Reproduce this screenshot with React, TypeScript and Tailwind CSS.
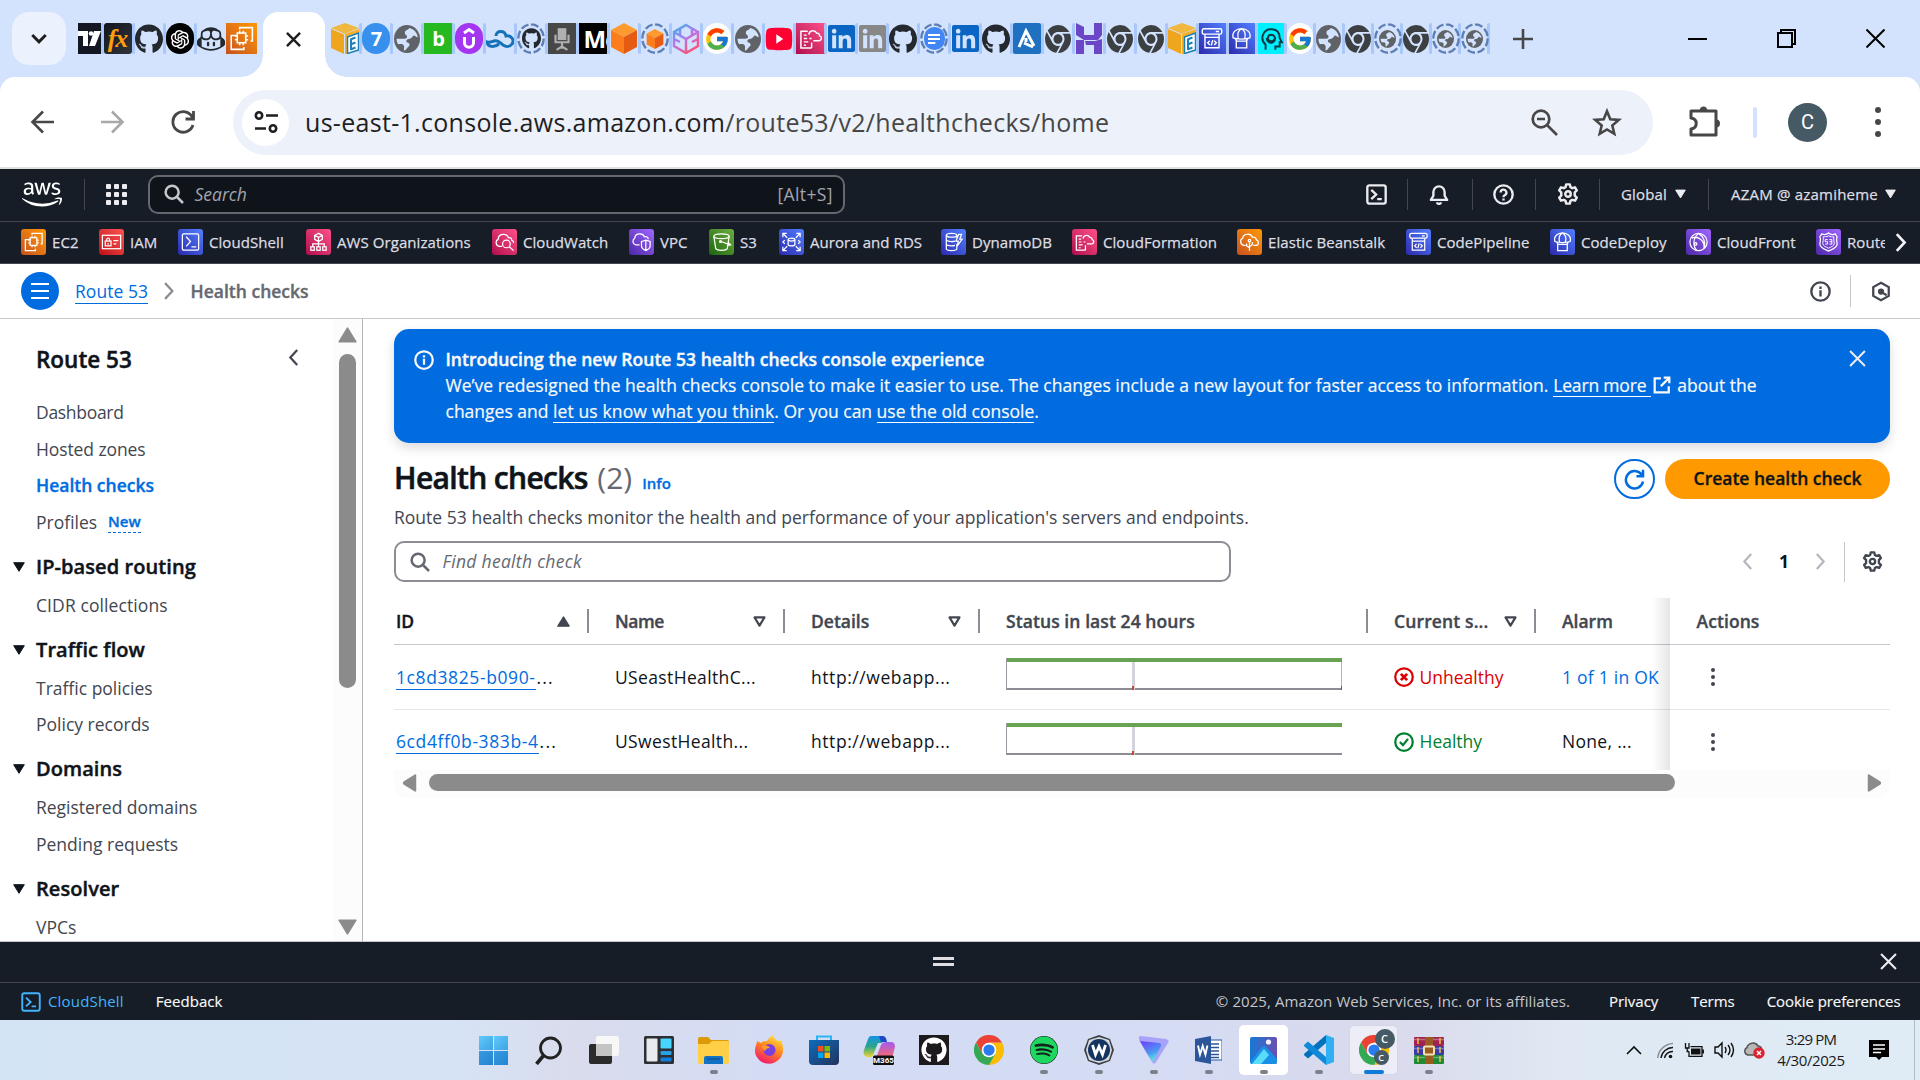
import React from 'react';
import { FaAws, FaGithub, FaYoutube, FaLinkedin, FaChrome, FaSpotify } from 'react-icons/fa6';
import { FcGoogle } from 'react-icons/fc';
import { AiOutlineOpenAI } from 'react-icons/ai';
import { SiGithubcopilot } from 'react-icons/si';

type P = { className?: string; children?: React.ReactNode };

/* ---------- small drawing helpers ---------- */

const Line = ({ className = '', children, sw = 1.5, vb = '0 0 24 24' }: P & { sw?: number; vb?: string }) => (
  <svg viewBox={vb} className={className} fill="none" stroke="currentColor" strokeWidth={sw} strokeLinecap="butt" strokeLinejoin="miter">
    {children}
  </svg>
);

const Cog = ({ className = '' }: P) => (
  <Line className={className} vb="0 0 16 16" sw={1.8}>
    <path strokeLinejoin="round" d="M6.7 1h2.6l.5 2 1.3.75 2-.6 1.3 2.25L12.9 6.8v2.4l1.5 1.4-1.3 2.25-2-.6-1.3.75-.5 2H6.7l-.5-2-1.3-.75-2 .6-1.3-2.25 1.5-1.4V6.8L1.6 5.4l1.3-2.25 2 .6L6.2 3z" />
    <circle cx="8" cy="8" r="2" />
  </Line>
);

const Search = ({ className = '' }: P) => (
  <Line className={className} vb="0 0 16 16" sw={2}>
    <circle cx="6.5" cy="6.5" r="5.2" />
    <path d="m10.2 10.2 5 5" />
  </Line>
);

const Chevron = ({ className = '', dir = 'right', sw = 2 }: P & { dir?: 'right' | 'left'; sw?: number }) => (
  <Line className={className} vb="0 0 10 16" sw={sw}>
    <path d={dir === 'right' ? 'M1.5 1 8 8l-6.5 7' : 'M8.5 1 2 8l6.5 7'} />
  </Line>
);

const Cross = ({ className = '', sw = 2 }: P & { sw?: number }) => (
  <Line className={className} vb="0 0 16 16" sw={sw}>
    <path d="m1 1 14 14M15 1 1 15" />
  </Line>
);

const Info = ({ className = '' }: P) => (
  <Line className={className} vb="0 0 16 16" sw={1.8}>
    <circle cx="8" cy="8" r="7" />
    <path d="M8 11.8V7M8 6V4.200" />
  </Line>
);

const Shell = ({ className = '', sw = 1.8 }: P & { sw?: number }) => (
  <Line className={className} vb="0 0 16 16" sw={sw}>
    <rect x="1" y="1" width="14" height="14" rx="1.6" />
    <path d="m4 4.5 3.7 3.5L4 11.5M8.5 11.5H12" />
  </Line>
);

const Caret = ({ className = '', up = false, hollow = false }: P & { up?: boolean; hollow?: boolean }) => (
  <svg viewBox="0 0 12 10" className={className} fill={hollow ? 'none' : 'currentColor'} stroke="currentColor" strokeWidth={hollow ? 2 : 1} strokeLinejoin="round">
    <path d={up ? 'M6 .7 11.3 9.3H.7z' : hollow ? 'M6 8.8 1.4 1.2h9.2z' : 'M6 9.3.7.7h10.6z'} />
  </svg>
);

/* ---------- service glyphs, 24x24 line drawings ---------- */

const glyphs: Record<string, React.ReactNode> = {
  ec2: <><rect x="8.5" y="7.5" width="7" height="8" /><path d="M10.5 5.5v2m3-2v2m-3 8v2m3-2v2M6.5 10h2m-2 3h2m7-3h2m-2 3h2M10.5 4.5v-1.5h10.5v11h-1.5M9 9.5H3.5v11.500H14v-2" /></>,
  iam: <><rect x="2.500" y="5" width="19" height="14" /><rect x="5.500" y="11" width="6" height="5" /><path d="M7 11V9.500a1.500 1.500 0 0 1 3 0V11M14 10.500h5M14 14h3M8.500 13v1.500" /></>,
  shell: <><rect x="3.500" y="3.500" width="17" height="17" rx="1.500" /><path d="m7.500 6.500 4.500 5-4.500 5M13 17h5" /></>,
  org: <><path d="M12 3l4 2.200v4L12 11.500 8 9.200v-4zM8 5.200l4 2 4-2M12 7.200v4.300M12 11.500V17M6 17v-3h12v3" /><rect x="4" y="17" width="3.600" height="3.600" /><rect x="10.200" y="17" width="3.600" height="3.600" /><rect x="16.400" y="17" width="3.600" height="3.600" /></>,
  watch: <><path d="M9.500 16.500H6.500a4 4 0 0 1-1-7.500C5.500 3 14.500 2.500 16 7.500c2-.500 3.500.500 3.500 2.500 1.500.500 2 1.500 2 3" /><circle cx="14" cy="14" r="4" /><path d="m17 17 4.500 4" /></>,
  vpc: <><path d="M10 15H6a3.800 3.800 0 0 1-1-7c0-5.500 8.500-6 10-1.500 2-.500 4 .500 4 2.500" /><path d="M12 11.500l4.500-1.500 4.500 1.500v4.500c0 2.500-2 4-4.500 5-2.500-1-4.500-2.500-4.500-5zM16.500 10v11" /></>,
  s3: <><ellipse cx="12" cy="6" rx="8" ry="2.500" /><path d="M4 6l2 13c1.500 2.300 10.500 2.300 12 0l2-13M11.500 11.500l9.500 3.500M19 12.500l2.500 2.500-3 .500" /><circle cx="11" cy="11.500" r="1" /></>,
  rds: <><path d="M3 7V3h4M3 3l4.500 4.500M21 7V3h-4m4 0-4.500 4.500M3 17v4h4m-4 0 4.500-4.500M21 17v4h-4m4 0-4.500-4.500M5 10l-2 2 2 2M19 10l2 2-2 2" /><ellipse cx="12" cy="9.500" rx="3.500" ry="1.500" /><path d="M8.500 9.500v5c0 2 7 2 7 0v-5" /></>,
  dynamo: <><ellipse cx="10" cy="5" rx="5.500" ry="2" /><path d="M4.500 5v14c0 2.500 11 2.500 11 0v-5M4.500 9.500c0 2 6 2.500 9 1.500M4.500 14c0 2 6 2.500 9 1.500M15.500 5v3M17.500 4l-3 7h2.500l-1 5 5-7h-2.500l2-5z" /></>,
  cfn: <><path d="M13 20.500H3.500v-15H9.500M13 15.500v5M6 9h2.500M6 12h3m2 0h2M6 15h4M6 18h2" /><path d="M14.500 14H20c2.500-1 2-4 0-4.500 0-2-1.500-2.500-2.500-2.200C16 4 11 4.500 10.500 8.500" /></>,
  bean: <><path d="M8 15.500H6a4 4 0 0 1-1-7.500C5 3 13.500 2.500 15 7c2-.500 4 .500 4 2.500 3 1 3 5.500 0 6h-3" /><path d="M12 21v-9M12 18l-3-2v-2.500M12 17l3-2.500V12" /><circle cx="12" cy="10.500" r="1.300" /></>,
  pipe: <><rect x="3" y="3" width="18" height="5" rx="1.500" /><path d="M5.500 8v3h13V8M5.500 11v9.500h13V11M10 14l-2 2 2 2M14 14l2 2-2 2M12.700 13.500l-1.400 5M15.500 5.500h3" /></>,
  deploy: <><path d="M4 11.500C2.500 6 7 2.500 12 2.500s9.500 3.500 8 9c-4 1.500-12 1.500-16 0zM12 2.500C7.500 5 8 9 9 12.500M12 2.500c4.500 2.500 4 6.500 3 10M6 12.500l1.500 2m10.500-2-1.500 2M7 14.500h10v6.500H7z" /></>,
  front: <><circle cx="12" cy="12" r="9" /><path d="M12 3c-6 5-6 13-2 17.500M12 3c5 3 8 9 5.500 16M5 8c6-3 13 2 13 10" /><circle cx="9" cy="14" r="1.300" /></>,
  route: <><path d="M12 2.500c2.500 2 5 2 7 1l2 3c-1.500 3 0 5 0 7.500 0 4-5 5.500-9 7.500-4-2-9-3.500-9-7.500C3 11.500 4.500 9.500 3 6.500l2-3c2 1 4.500 1 7-1z" /><path d="M12 5.500c2 1 4 1.300 5.500 1-.500 3 .500 5 .500 7 0 2.500-3 3.500-6 5-3-1.500-6-2.500-6-5 0-2 1-4 .500-7 1.500.300 3.500 0 5.500-1zM8.500 9.500h2.700M8.500 9.500v2.200h2.500v2.500H8.500M13 9.500h2.500v4.700H13m0-2.500h2.500" strokeWidth="1" /></>,
};

const Service = ({ g, bg, className }: { g: string; bg: string; className: string }) => (
  <span className={`flex shrink-0 items-center justify-center bg-gradient-to-tr ${bg} ${className}`}>
    <Line className="h-full w-full p-px text-white" sw={1.3}>{glyphs[g]}</Line>
  </span>
);

const orange = 'from-[#c8511b] to-[#ff9900]';
const red = 'from-[#bd0816] to-[#ff5252]';
const blue = 'from-[#2e27ad] to-[#527fff]';
const pink = 'from-[#b0084d] to-[#ff4f8b]';
const purple = 'from-[#4d27a8] to-[#a166ff]';
const green = 'from-[#1b660f] to-[#6cae3e]';

/* ---------- browser tab icons ---------- */

const Globe = ({ className = '' }: P) => (
  <svg viewBox="0 0 24 24" className={className} preserveAspectRatio="none">
    <circle cx="12" cy="12" r="12" fill="#5f6368" />
    <path fill="#d3e3fd" d="M14 2.500c-.5 2-4 1.500-4 4s2 1.800 2 3.500-2 1.800-4 1.800H2.300c0 2 .7 3.500 1.500 4.800 2-.6 4.200-.6 5.200.9s-.5 3.500.5 4.500c2-.5 2.500-2.500 4-3.500s1-3-1-3.500-1-3 1-3 3-1 4-2.500 2.500 1 4.500 1c-.5-4-3.500-7-8-8z" />
  </svg>
);
const Ring = ({ children }: P) => (
  <span className="relative flex h-[31px] w-[28px] items-center justify-center">
    <svg viewBox="0 0 28 31" className="absolute inset-0 h-[31px] w-[28px]" fill="none" stroke="#5d7fb5" strokeWidth="2.4"><ellipse cx="14" cy="15.500" rx="12.700" ry="14.200" pathLength="64" strokeDasharray="6 2" /></svg>
    {children}
  </span>
);
const CubeBox = () => (
  <svg viewBox="0 0 28 31" className="h-[31px] w-[28px]" preserveAspectRatio="none">
    <path d="M0 5 14 0l14 5-14 6z" fill="#f0b840" /><path d="M0 6l13 5.500V31L0 25z" fill="#f0a51e" /><path d="M14 11 28 6v5l-12 4v16h-2z" fill="#f5b027" />
    <path d="M16.500 14l11-4v17l-11 3.500z" fill="#fff" stroke="#1d80b8" strokeWidth="1.500" /><path d="M19.500 16.500l5-2M19.500 21.500l5-2M19.500 26.500l5-2M20 16v11" stroke="#1d80b8" strokeWidth="2" />
  </svg>
);
const Cube = ({ className = '' }: P) => (
  <svg viewBox="0 0 28 31" className={className}><path d="M14 0 27 7 14 14 1 7z" fill="#ff9a2e" /><path d="M1 7l13 7v17L1 24z" fill="#fb7d1c" /><path d="M27 7 14 14v17l13-7z" fill="#e55b14" /></svg>
);
const Sq = ({ className = '', children }: P) => <span className={`flex h-[31px] w-[28px] items-center justify-center overflow-hidden font-['Open_Sans'] font-bold ${className}`}>{children}</span>;
const Gh = () => <FaGithub className="h-[30px] w-[28px] text-[#24292f]" preserveAspectRatio="none" />;
const ChromeMono = () => <FaChrome className="h-[28px] w-[26px] text-[#3c4043]" preserveAspectRatio="none" />;
const In = ({ className = '' }: P) => <FaLinkedin className={`h-[31px] w-[27px] ${className}`} preserveAspectRatio="none" />;
const G = () => <span className="flex h-[31px] w-[28px] items-center justify-center rounded-full bg-white"><FcGoogle className="h-[26px] w-[26px]" /></span>;

const leftTabs = [
  <span className="flex h-[31px] w-[28px] items-center justify-center rounded-[3px] bg-gradient-to-br from-[#12151f] to-[#33353c] font-['Liberation_Serif'] text-[26px] font-bold italic leading-none tracking-[-1px] text-[#ff9d0a]">fx</span>,
  <Gh />,
  <span className="flex h-[31px] w-[28px] items-center justify-center rounded-full bg-black"><AiOutlineOpenAI className="h-[24px] w-[24px] text-white" /></span>,
  <SiGithubcopilot className="h-[28px] w-[28px] text-[#24292f]" preserveAspectRatio="none" />,
  <Service g="ec2" bg={orange} className="h-[31px] w-[31px]" />,
];

const rightTabs = [
  <CubeBox />,
  <Sq className="rounded-full bg-[#3790ee] text-[20px] text-white">7</Sq>,
  <Globe className="h-[28px] w-[26px]" />,
  <Sq className="bg-[#25b91f] text-[20px] text-white">b</Sq>,
  <Sq className="rounded-full bg-[#a435f0] text-white"><Line className="h-6 w-6" sw={3}><path d="M7 6l5-3.500L17 6M7.500 10v6c0 5.500 9 5.500 9 0v-6" /></Line></Sq>,
  <svg viewBox="0 0 28 18" className="h-[18px] w-[28px]"><path d="M10 6c0-6 9-6 10 0 5-1 9 4 6 8-2 3-6 3-9 1-3-3-6-5-9-4s-5 2-7 1c1 5 7 6 12 2" fill="none" stroke="#1672b6" strokeWidth="3" /></svg>,
  <Ring><FaGithub className="h-[21px] w-[19px] text-[#24292f]" preserveAspectRatio="none" /></Ring>,
  <Sq className="bg-[#474747] text-[#b0b0b0]"><Line className="h-[26px] w-[26px]" sw={2}><rect x="9" y="3" width="6" height="9" fill="currentColor" /><path d="M6 8v7h12V8M12 15v6M7 22l5-3 5 3" /></Line></Sq>,
  <Sq className="!justify-start bg-black pl-1 font-['Liberation_Serif'] text-[24px] tracking-[-1px] text-white">Me</Sq>,
  <Cube className="h-[31px] w-[28px]" />,
  <Ring><Cube className="h-[20px] w-[18px]" /></Ring>,
  <svg viewBox="0 0 28 31" className="h-[31px] w-[28px]" fill="none" strokeWidth="2.500"><defs><linearGradient id="cb" x1="0" y1="0" x2=".6" y2="1"><stop offset="0" stopColor="#2fb9e8" /><stop offset=".5" stopColor="#b178f0" /><stop offset="1" stopColor="#f7567c" /></linearGradient></defs><path stroke="url(#cb)" d="M14 2l12 7v14l-12 7L2 23V9zM2 9l12 7 12-7M14 16v14M8 5v7M20 5v7M2 16l6 3M26 16l-6 3" /></svg>,
  <G />,
  <Globe className="h-[28px] w-[26px]" />,
  <FaYoutube className="h-[30px] w-[29px] bg-[linear-gradient(#fff,#fff)] bg-[length:10px_12px] bg-center bg-no-repeat text-[#ff0033]" preserveAspectRatio="none" />,
  <Service g="cfn" bg={pink} className="h-[31px] w-[29px]" />,
  <In className="text-[#0a66c2]" />,
  <In className="text-[#888888]" />,
  <Gh />,
  <Ring><Sq className="!h-[23px] !w-[21px] shrink-0 rounded-full bg-[#4285f4] text-white"><Line className="h-4 w-4" sw={3}><path d="M3 6h18M3 12h18M3 18h11" /></Line></Sq></Ring>,
  <In className="text-[#0a66c2]" />,
  <Gh />,
  <Sq className="rounded-[2px] bg-[#1f70c1] text-white"><Line className="h-6 w-6" sw={3}><path d="M4 20 11 4l8 15M9 16l9 4M11 11v4" /></Line></Sq>,
  <ChromeMono />,
  <svg viewBox="0 0 28 31" className="h-[31px] w-[28px]" fill="#6b47c8"><path d="M1 0l8 4v8l10 0V0h8v12l-4 5H9L1 12zM1 31V17l8 0v14zM19 31v-9H11l-1-4h10l7-2v15z" /></svg>,
  <ChromeMono />,
  <ChromeMono />,
  <CubeBox />,
];

const tailTabs = [
  <Service g="pipe" bg={blue} className="h-[31px] w-[28px]" />,
  <Service g="deploy" bg={blue} className="h-[31px] w-[27px]" />,
  <Sq className="!w-[27px] bg-[#00f0ff] text-[#0b3a44]"><Line className="h-7 w-7" sw={1.800}><path d="M7 22v-5C1 12 5 2 13 3c6 .500 7 5 7 8l2 4h-2v4h-4v3M15 12a3 3 0 1 1-3-4c4 0 5 5 2 7-3 1.500-6-1-6-4" /></Line></Sq>,
  <G />,
  <Globe className="h-[28px] w-[25px]" />,
  <ChromeMono />,
  <Ring><Globe className="h-[18px] w-[17px]" /></Ring>,
  <ChromeMono />,
  <Ring><Globe className="h-[18px] w-[17px]" /></Ring>,
  <Ring><Globe className="h-[18px] w-[17px]" /></Ring>,
];

const Sep = () => <span className="h-[31px] w-[3px] shrink-0 rounded-full bg-[#a8c7fa]" />;

const TabStrip = () => (
  <div className="flex h-[77px] items-start bg-[#d3e3fd]">
    <button className="ml-3 mt-3 flex h-[53px] w-[54px] shrink-0 items-center justify-center rounded-[17px] bg-[#ebf1fd]">
      <Line className="h-[18px] w-[18px] text-[#1f1f1f]" vb="0 0 16 16" sw={2.6}><path d="m2 4.500 6 6 6-6" /></Line>
    </button>
    <div className="ml-[11.5px] mt-[23px] flex h-[31px] items-center">
      <Sq className="!w-[23px] bg-[#131722] text-white"><svg viewBox="0 0 23 16" className="h-4 w-[23px]" fill="#fff"><path d="M0 0h10v15H5V5H0zM16 0h7l-6 15h-6z" /><circle cx="13" cy="2.500" r="2.300" /></svg></Sq>
      {leftTabs.map((t, i) => (
        <div key={i} className="flex h-[31px] w-[31.3px] items-center">{i === 4 ? null : <Sep />}{t}</div>
      ))}
    </div>
    <div className="relative ml-[6px] mt-3 flex h-[65px] w-[62px] shrink-0 items-center justify-center rounded-t-[15px] bg-white pb-[11px]">
      <Cross className="h-[15px] w-[15px] text-[#1f1f1f]" sw={2.6} />
      <span className="absolute bottom-0 left-[-22px] h-[22px] w-[22px] bg-[radial-gradient(circle_at_0_0,#d3e3fd_21.5px,white_22px)]" />
      <span className="absolute bottom-0 right-[-22px] h-[22px] w-[22px] bg-[radial-gradient(circle_at_100%_0,#d3e3fd_21.5px,white_22px)]" />
    </div>
    <div className="ml-[6.5px] mt-[23px] flex h-[31px] items-center">
      {rightTabs.map((t, i) => (
        <div key={i} className="flex h-[31px] w-[31px] items-center justify-between"><span className="flex h-[31px] w-[28px] items-center justify-center">{t}</span><Sep /></div>
      ))}
      {tailTabs.map((t, i) => (
        <div key={i} className="flex h-[31px] w-[29.1px] items-center justify-between overflow-hidden"><span className="flex h-[31px] w-[26px] items-center justify-center">{t}</span><Sep /></div>
      ))}
    </div>
    <Line className="ml-[22.5px] mt-[29px] h-5 w-5 shrink-0 text-[#474747]" vb="0 0 20 20" sw={2.6}><path d="M10 0v20M0 10h20" /></Line>
    <div className="ml-auto mr-[35px] mt-[29px] flex h-[19px] items-center gap-[70px] text-black">
      <span className="h-[2px] w-[19px] bg-black" />
      <Line className="h-[19px] w-[19px]" vb="0 0 19 19" sw={2}><path d="M1 4h14v14H1zM4 4V1h14v14h-3" /></Line>
      <Line className="h-[19px] w-[19px]" vb="0 0 19 19" sw={2}><path d="m.5.5 18 18M18.500.500l-18 18" /></Line>
    </div>
  </div>
);

const Toolbar = () => (
  <div className="bg-[#d3e3fd]">
    <div className="flex h-[90px] items-center rounded-t-[15px] bg-white text-[#474747]">
      <Line className="ml-[30px] h-6 w-6" sw={2.6}><path d="M24 12H2.500M13 1.500 2.500 12 13 22.500" /></Line>
      <Line className="ml-[47px] h-6 w-6 text-[#a8a8a8]" sw={2.6}><path d="M0 12h21.500M11 1.500 21.500 12 11 22.500" /></Line>
      <Line className="ml-[46px] h-6 w-6" sw={2.8}><path d="M22 15a10.300 10.300 0 1 1-.5-7.500M22.500 1v8h-8" /></Line>
      <div className="ml-[38px] flex h-[65px] w-[1420px] items-center rounded-full bg-[#edf1fa]">
        <span className="ml-[9px] flex h-[47px] w-[47px] items-center justify-center rounded-full bg-white text-[#1f1f1f]">
          <Line className="h-[24px] w-[24px]" sw={2.6}><circle cx="5" cy="5.500" r="3.200" /><path d="M12 5.500h12M1 18.500h11" /><circle cx="19" cy="18.500" r="3.200" /></Line>
        </span>
        <span className="ml-[16px] mt-[2px] whitespace-nowrap text-[25px] tracking-[0.3px] text-[#474747]"><span className="text-[#1f1f1f]">us-east-1.console.aws.amazon.com</span>/route53/v2/healthchecks/home</span>
        <Line className="ml-auto h-[27px] w-[27px]" vb="0 0 27 27" sw={2.700}><circle cx="10" cy="10" r="8.300" /><path d="m16 16 10 10M6 10h8" /></Line>
        <Line className="ml-[34px] mr-[31px] h-[29px] w-[30px]" vb="0 0 30 29" sw={2.6}><path d="m15 3.200 3.300 8 8.500.700-6.500 5.600 2 8.300-7.300-4.400-7.300 4.400 2-8.300-6.500-5.600 8.500-.700z" /></Line>
      </div>
      <Line className="ml-[36px] h-[32px] w-[32px]" vb="0 0 32 32" sw={3}><path d="M2 5h25v24H2v-6c7-1 7-10 0-11z" strokeLinejoin="round" /><path d="M10.500 5a4 4.500 0 0 1 8 0zM27 13.500a4 4 0 0 1 0 8z" fill="currentColor" strokeWidth="0" /></Line>
      <span className="ml-[32px] h-[31px] w-[4px] rounded-full bg-[#d3e3fd]" />
      <span className="ml-[31px] flex h-[39px] w-[39px] items-center justify-center rounded-full bg-[#455a64] font-['Roboto'] text-[20px] text-white">C</span>
      <span className="ml-[47.5px] flex flex-col gap-[6px]">{[0, 1, 2].map((i) => <span key={i} className="h-[6px] w-[6px] rounded-full bg-[#474747]" />)}</span>
    </div>
    <div className="h-[2px] bg-[#dfe1dd]" />
  </div>
);

/* ---------- AWS header ---------- */

const Bar = ({ className = '' }: P) => <span className={`h-[31px] w-px bg-[#424650] ${className}`} />;

const AwsHeader = () => (
  <div className="flex h-[52px] items-center bg-[#161d26] pb-[2px] text-[15px] font-medium text-[#dedee3] [-webkit-text-stroke:0.25px]">
    <FaAws className="ml-[22px] h-[33px] w-[40px] text-white" />
    <Bar className="ml-[22px]" />
    <div className="ml-[21px] grid grid-cols-3 gap-[3px]">{Array.from({ length: 9 }, (_, i) => <span key={i} className="h-[5px] w-[5px] rounded-[1px] bg-[#ebebf0]" />)}</div>
    <div className="ml-[21px] flex h-[39px] w-[697px] items-center rounded-[10px] border-2 border-[#656871] bg-[#0f141a] text-[17.5px] font-normal text-[#a4a4ad] [-webkit-text-stroke:0]">
      <Search className="ml-[14px] h-[20px] w-[20px] text-[#c6c6cd]" />
      <span className="ml-[10.5px] italic">Search</span>
      <span className="ml-auto mr-[10px] tracking-[0.4px]">[Alt+S]</span>
    </div>
    <Shell className="ml-[521px] h-[21px] w-[21px] text-[#ebebf0]" />
    <Bar className="ml-[20px]" />
    <Line className="ml-[21px] h-[21px] w-[20px] text-[#ebebf0]" vb="0 0 16 16" sw={1.9}><path strokeLinejoin="round" d="M1.500 12.300h13L12.500 9V6a4.500 4.500 0 0 0-9 0v3z" /><path d="M6.300 14.300a1.800 1.800 0 0 0 3.400 0" /></Line>
    <Bar className="ml-[22.5px]" />
    <Line className="ml-[20px] h-[21px] w-[21px] text-[#ebebf0]" vb="0 0 16 16" sw={1.800}><circle cx="8" cy="8" r="7" /><path d="M5.800 6.500a2.200 2.200 0 1 1 3.300 1.900C8.300 8.800 8 9 8 10M8 11v1.600" /></Line>
    <Bar className="ml-[21px]" />
    <Cog className="ml-[21px] h-[22px] w-[22px] text-[#ebebf0]" />
    <Bar className="ml-[20.500px]" />
    <span className="ml-[21px] tracking-[0.16px]">Global</span>
    <Caret className="ml-[8px] h-[10px] w-[11px] text-[#ebebf0]" />
    <Bar className="ml-[22px]" />
    <span className="ml-[22px] whitespace-nowrap tracking-[0.21px]">AZAM @ azamiheme</span>
    <Caret className="ml-[7px] h-[10px] w-[11px] text-[#ebebf0]" />
  </div>
);

const favs: [string, string, string, string][] = [
  ['EC2', 'ec2', orange, 'w-[78px]'],
  ['IAM', 'iam', red, 'w-[79px]'],
  ['CloudShell', 'shell', blue, 'w-[128px]'],
  ['AWS Organizations', 'org', pink, 'w-[186px]'],
  ['CloudWatch', 'watch', pink, 'w-[137px]'],
  ['VPC', 'vpc', purple, 'w-[80px]'],
  ['S3', 's3', green, 'w-[70px]'],
  ['Aurora and RDS', 'rds', blue, 'w-[162px]'],
  ['DynamoDB', 'dynamo', blue, 'w-[131px]'],
  ['CloudFormation', 'cfn', pink, 'w-[165px]'],
  ['Elastic Beanstalk', 'bean', orange, 'w-[169px]'],
  ['CodePipeline', 'pipe', blue, 'w-[144px]'],
  ['CodeDeploy', 'deploy', blue, 'w-[136px]'],
  ['CloudFront', 'front', purple, 'w-[130px]'],
  ['Route 53', 'route', purple, 'w-[69px]'],
];

const Favorites = () => (
  <div className="flex h-[43px] items-center border-b border-t border-[#424650] bg-[#161d26] pb-px pl-[21px]">
    {favs.map(([name, g, bg, w]) => (
      <div key={name} className={`flex shrink-0 items-center overflow-hidden ${w}`}>
        <Service g={g} bg={bg} className="h-[26px] w-[25px] rounded-[3px]" />
        <span className="ml-[6px] whitespace-nowrap text-[15px] font-medium leading-[24px] tracking-[0.07px] text-[#dedee3] [-webkit-text-stroke:0.25px]">{name}</span>
      </div>
    ))}
    <Chevron className="ml-[10px] h-[21px] w-[12px] text-[#f3f3f7]" sw={2.2} />
  </div>
);

const Breadcrumbs = () => (
  <div className="flex h-[55px] items-center border-b border-[#c6c6cd] bg-white text-[17.5px] text-[#424650]">
    <span className="ml-[21px] flex h-[38px] w-[38px] flex-col items-center justify-center gap-[5px] rounded-full bg-[#006ce0]">
      {[0, 1, 2].map((i) => <span key={i} className="h-[2px] w-[18px] bg-white" />)}
    </span>
    <a className="ml-[16px] border-b border-[#006ce0] leading-[24px] tracking-[0.05px] text-[#006ce0]">Route 53</a>
    <Chevron className="ml-[15px] h-[18px] w-[12px] text-[#8c8c94]" sw={2} />
    <span className="ml-[15.5px] font-semibold text-[#656871] [-webkit-text-stroke:0.35px]">Health checks</span>
    <Info className="ml-auto h-[21px] w-[21px]" />
    <span className="ml-[19px] h-[32px] w-px bg-[#c6c6cd]" />
    <Line className="ml-[20px] mr-[29px] h-[21px] w-[20px]" vb="0 0 16 16" sw={1.800}><path d="M8 1 14.200 4.500v7L8 15l-6.200-3.500v-7z" /><circle cx="8" cy="8" r="1.600" fill="currentColor" /><path d="m8.500 8.500 4 2.500" /></Line>
  </div>
);

/* ---------- sidebar ---------- */

const Item = ({ className = '', children }: P) => <div className={`flex h-[36.5px] items-center pl-[36px] ${className}`}>{children}</div>;
const Group = ({ children }: P) => (
  <div className="flex h-[46.6px] items-center pt-[7px] text-[20px] font-semibold text-[#0f141a] [-webkit-text-stroke:0.45px]">
    <Caret className="ml-[13px] h-[10px] w-[12px]" /><span className="ml-[11px] tracking-[0.08px]">{children}</span>
  </div>
);

const Sidebar = () => (
  <aside className="flex w-[363px] shrink-0 overflow-hidden border-r border-[#b4b4bb] bg-white">
    <nav className="w-[333px] overflow-hidden text-[17.5px] text-[#424650]">
      <div className="flex h-[75px] items-center pl-[36px] pr-[34px] pt-[5px]">
        <h2 className="pt-px text-[22.5px] font-semibold text-[#0f141a] [-webkit-text-stroke:0.45px]">Route 53</h2>
        <Chevron dir="left" className="mb-[4px] ml-auto h-[17px] w-[11px]" sw={2.1} />
      </div>
      <Item className="tracking-[-0.3px]">Dashboard</Item>
      <Item className="tracking-[-0.1px]">Hosted zones</Item>
      <Item className="font-semibold text-[#006ce0] [-webkit-text-stroke:0.35px]">Health checks</Item>
      <Item>Profiles<span className="ml-[11px] border-b border-dashed border-[#006ce0] text-[15px] font-semibold leading-[22px] text-[#006ce0] [-webkit-text-stroke:0.3px]">New</span></Item>
      <Group>IP-based routing</Group>
      <Item className="tracking-[0.1px]">CIDR collections</Item>
      <Group>Traffic flow</Group>
      <Item>Traffic policies</Item>
      <Item>Policy records</Item>
      <Group>Domains</Group>
      <Item className="tracking-[-0.03px]">Registered domains</Item>
      <Item>Pending requests</Item>
      <Group>Resolver</Group>
      <Item>VPCs</Item>
    </nav>
    <div className="flex w-[29px] flex-col items-center bg-[#fcfcfc] pt-[8px] text-[#8b8b8b]">
      <Caret up className="h-[16px] w-[19px]" />
      <span className="mt-[11px] h-[334px] w-[17px] rounded-full bg-[#8b8b8b]" />
      <Caret className="mb-[6px] mt-auto h-[16px] w-[19px]" />
    </div>
  </aside>
);

/* ---------- main ---------- */

const U = ({ className = '', children }: P) => <a className={`border-b border-white pb-px ${className}`}>{children}</a>;

const Banner = () => (
  <section className="flex h-[114px] rounded-[15px] bg-[#006ce0] pl-[20px] pt-[18px] text-[17.5px] leading-[26px] text-[#f9f9fa] shadow-[0_5px_12px_rgba(0,7,22,0.14)]">
    <Info className="mt-[3px] h-[20px] w-[20px] shrink-0" />
    <div className="ml-[11.5px] w-[1400px] whitespace-nowrap [-webkit-text-stroke:0.2px]">
      <div className="-mt-px font-semibold tracking-[0.03px] [-webkit-text-stroke:0.4px]">Introducing the new Route 53 health checks console experience</div>
      <div className="flex">
        <span className="tracking-[0.027px]">We’ve redesigned the health checks console to make it easier to use. The changes include a new layout for faster access to information.</span>
        <U className="ml-[5px] h-[25px] w-[98px] tracking-[-0.18px]">Learn more</U>
        <Line className="ml-[2px] mt-[4px] h-[18px] w-[18px]" vb="0 0 16 16" sw={2}><path d="M7 2H1.500v12.500H14V9M9.500 1.500h5v5M14.500 1.500 7 9" /></Line>
        <span className="ml-[6px]">about the</span>
      </div>
      <div className="flex">
        <span className="mr-[4.500px]">changes and</span><U className="h-[25px] tracking-[0.13px]">let us know what you think</U><span className="mr-[4.500px]">. Or you can</span><U className="h-[25px]">use the old console</U>.
      </div>
    </div>
    <Cross className="ml-auto mr-[24px] mt-[3px] h-[17px] w-[17px] text-[#ebebf0]" sw={1.9} />
  </section>
);

const Head = ({ children, w, sort, pl = 'pl-[27px]', line = true }: P & { w: string; sort?: 'up' | 'down'; pl?: string; line?: boolean }) => (
  <div className={`flex shrink-0 items-center ${w} ${pl}`}>
    <span className="whitespace-nowrap">{children}</span>
    {sort && <Caret up={sort === 'up'} hollow={sort === 'down'} className="ml-auto mr-[17.5px] h-[11px] w-[13px]" />}
    {line && <span className={`h-[24px] w-[2px] bg-[#8c8c94] ${sort ? '' : 'ml-auto'}`} />}
  </div>
);

const Spark = ({ end }: { end: boolean }) => (
  <div className="-mt-[6px] flex h-[32px] w-[336px] flex-col border-b-2 border-l border-b-[#8c8c94] border-l-[#9a9aa2] bg-white">
    <div className="h-[4px] shrink-0 bg-[#67a353]" />
    <div className="flex flex-1">
      <div className="ml-[125px] flex h-[28px] w-[3px] flex-col justify-end bg-[#d3d3db]"><span className="h-[4px] w-[2px] bg-[#c8442f]" /></div>
      {end && <div className="ml-auto flex h-[28px] w-px flex-col justify-end bg-[#b5b5bd]"><span className="h-[4px] bg-[#d13212]" /></div>}
    </div>
  </div>
);

const Status = ({ ok }: { ok: boolean }) => (
  <span className={`flex items-center ${ok ? 'text-[#00802f]' : 'text-[#db0000]'}`}>
    <Line className="h-[20px] w-[20px]" vb="0 0 16 16" sw={1.8}><circle cx="8" cy="8" r="7" />{ok ? <path d="m4.700 8 2.500 2.500 4-5" /> : <path d="m5.500 5.500 5 5m0-5-5 5" strokeWidth="2.200" />}</Line>
    <span className="ml-[5.500px]">{ok ? 'Healthy' : 'Unhealthy'}</span>
  </span>
);

const Row = ({ id, name, ok, children, className = '', idCls }: P & { id: string; name: string; ok: boolean; idCls: string }) => (
  <div className={`flex items-center ${className}`}>
    <div className="w-[196px] shrink-0 pl-[2px]"><a className={`border-b border-[#006ce0] text-[#006ce0] ${idCls}`}>{id}</a><span className="pl-px tracking-[1.2px]">...</span></div>
    <div className="w-[195px] shrink-0 pl-[25px] tracking-[0.36px]">{name}</div>
    <div className="w-[196px] shrink-0 pl-[26px] tracking-[0.57px]">http://webapp...</div>
    <div className="w-[388px] shrink-0 pl-[25px]"><Spark end={!ok} /></div>
    <div className="w-[167px] shrink-0 pl-[25px]"><Status ok={ok} /></div>
    <div className="whitespace-nowrap pl-[26px]">{children}</div>
  </div>
);

const Dots = () => <span className="flex flex-col items-center gap-[3px]">{[0, 1, 2].map((i) => <span key={i} className="h-[4px] w-[4px] rounded-full bg-[#424650]" />)}</span>;

const Table = () => (
  <div className="mt-[16px]">
    <div className="flex text-[17.5px]">
      <div className="w-[1276px] overflow-hidden">
        <div className="flex h-[47px] items-center border-b border-[#c6c6cd] font-semibold text-[#424650] [-webkit-text-stroke:0.35px]">
          <Head w="w-[195px]" pl="pl-[2px]" sort="up"><span className="text-[#0f141a]">ID</span></Head>
          <Head w="w-[196px]" pl="pl-[26px]" sort="down"><span className="tracking-[-0.4px]">Name</span></Head>
          <Head w="w-[195px]" pl="pl-[26px]" sort="down">Details</Head>
          <Head w="w-[388px]" pl="pl-[26px]"><span className="tracking-[0.08px]">Status in last 24 hours</span></Head>
          <Head w="w-[168px]" pl="pl-[26px]" sort="down"><span className="tracking-[0.13px]">Current s...</span></Head>
          <Head w="w-[134px]" pl="pl-[26px]" line={false}>Alarm</Head>
        </div>
        <Row className="h-[65px] border-b border-[#e6e6ea] text-[#0f141a]" id="1c8d3825-b090-" idCls="tracking-[0.6px]" name="USeastHealthC..." ok={false}><span className="tracking-[0.24px] text-[#006ce0]">1 of 1 in OK</span></Row>
        <Row className="h-[60px] pt-[3px] text-[#0f141a]" id="6cd4ff0b-383b-4" idCls="tracking-[0.6px]" name="USwestHealth..." ok><span className="tracking-[0.3px]">None, ...</span></Row>
      </div>
      <div className="relative w-[220px] bg-white">
        <span className="absolute bottom-0 left-[-18px] top-0 w-[18px] bg-gradient-to-r from-transparent to-[rgba(0,7,22,0.1)]" />
        <div className="flex h-[47px] items-center border-b border-[#c6c6cd] pl-[26.5px] font-semibold tracking-[0.08px] text-[#424650] [-webkit-text-stroke:0.35px]">Actions</div>
        <div className="flex h-[65px] items-center border-b border-[#e6e6ea] pl-[41px]"><Dots /></div>
        <div className="flex h-[60px] items-center pl-[41px] pt-[3px]"><Dots /></div>
      </div>
    </div>
    <div className="flex h-[28px] items-center rounded-b-[14px] bg-[#fcfcfc] pb-[3px] text-[#8b8b8b]">
      <svg viewBox="0 0 10 12" className="ml-[8px] h-[18px] w-[15px]" fill="currentColor" preserveAspectRatio="none"><path d="M9.500 1v10q0 1-1 .700L1 7Q0 6 1 5L8.500.300q1-.300 1 .700z" /></svg>
      <span className="ml-[12px] h-[17px] w-[1246px] rounded-full bg-[#8b8b8b]" />
      <svg viewBox="0 0 10 12" className="ml-auto mr-[8px] h-[18px] w-[15px] rotate-180" fill="currentColor" preserveAspectRatio="none"><path d="M9.500 1v10q0 1-1 .700L1 7Q0 6 1 5L8.500.300q1-.300 1 .700z" /></svg>
    </div>
  </div>
);

const Main = () => (
  <main className="flex-1 bg-white pl-[31px] pr-[30px] pt-[10px]">
    <Banner />
    <div className="mt-[16px] flex h-[40px] items-center">
      <h1 className="flex items-baseline pt-[2px] leading-[38px]">
        <span className="text-[30px] font-semibold tracking-[-0.65px] text-[#0f141a] [-webkit-text-stroke:0.6px]">Health checks</span>
        <span className="ml-[9.5px] text-[30px] text-[#656871]">(2)</span>
        <span className="ml-[10px] text-[15px] font-semibold text-[#006ce0] [-webkit-text-stroke:0.3px]">Info</span>
      </h1>
      <span className="ml-auto flex h-[40px] w-[41px] items-center justify-center rounded-full border-2 border-[#006ce0] text-[#006ce0]">
        <Line className="h-[21px] w-[21px]" vb="0 0 16 16" sw={1.9}><path d="M14.500 9.500A6.600 6.600 0 1 1 13.500 4.500M14.500.500v5h-5" /></Line>
      </span>
      <button className="ml-[10px] flex h-[40px] w-[225px] items-center justify-center rounded-full bg-[#ff9900] pb-px text-[17.5px] font-semibold text-[#0f141a] [-webkit-text-stroke:0.35px]">Create health check</button>
    </div>
    <p className="mt-[6px] text-[17.5px] leading-[25px] tracking-[0.018px] text-[#424650]">Route 53 health checks monitor the health and performance of your application's servers and endpoints.</p>
    <div className="mt-[11px] flex h-[41px] items-center">
      <div className="flex h-[41px] w-[837px] items-center rounded-[10px] border-2 border-[#8c8c94] pl-[14px] text-[17.5px] italic text-[#656871]">
        <Search className="h-[20px] w-[20px] text-[#656871]" />
        <span className="ml-[12.5px] tracking-[0.3px]">Find health check</span>
      </div>
      <Chevron dir="left" className="ml-[511px] h-[17px] w-[11px] text-[#b4b4bb]" sw={2} />
      <span className="ml-[25px] w-[12px] text-center text-[17.5px] font-bold text-[#0f141a]">1</span>
      <Chevron className="ml-[25px] h-[17px] w-[11px] text-[#b4b4bb]" sw={2} />
      <span className="ml-[18px] h-[40px] w-px bg-[#c6c6cd]" />
      <Cog className="ml-[17px] h-[21px] w-[21px] text-[#424650]" />
    </div>
    <Table />
  </main>
);

const Footer = () => (
  <div className="border-t border-[#c6c6cd] bg-[#161d26]">
    <div className="flex h-[40px] items-center pb-px pl-[933px] pr-[23px]">
      <span className="flex flex-col gap-[3px]"><i className="h-[3px] w-[21px] bg-[#dedee3]" /><i className="h-[3px] w-[21px] bg-[#dedee3]" /></span>
      <Cross className="ml-auto h-[17px] w-[17px] text-[#ebebf0]" sw={2} />
    </div>
    <div className="flex h-[38px] items-center whitespace-nowrap border-t border-[#424650] text-[15px] text-[#f9f9fa]">
      <Shell className="ml-[21px] h-[20px] w-[20px] text-[#42b4ff]" sw={1.5} />
      <span className="ml-[7px] font-medium tracking-[0.17px] text-[#42b4ff]">CloudShell</span>
      <span className="ml-[32px] font-medium tracking-[0.05px] [-webkit-text-stroke:0.15px]">Feedback</span>
      <span className="ml-auto tracking-[0.08px] text-[#c6c6cd]">© 2025, Amazon Web Services, Inc. or its affiliates.</span>
      <span className="ml-[39px] [-webkit-text-stroke:0.15px]">Privacy</span>
      <span className="ml-[32.500px] [-webkit-text-stroke:0.15px]">Terms</span>
      <span className="ml-[32px] mr-[19.500px] tracking-[-0.08px] [-webkit-text-stroke:0.15px]">Cookie preferences</span>
    </div>
  </div>
);

/* ---------- taskbar ---------- */

const ChromeColor = ({ className = '' }: P) => (
  <svg viewBox="-12 -12 24 24" className={className}>
    <path d="M0-6H10.400A12 12 0 0 1 0 12L5.200 3z" fill="#fbbc04" /><path d="M-5.200 3-10.400-6A12 12 0 0 0 0 12L5.200 3z" fill="#34a853" />
    <path d="M-10.400-6-5.200 3 0-6H10.400A12 12 0 0 0-10.400-6z" fill="#ea4335" />
    <circle r="5.800" fill="#fff" /><circle r="4.500" fill="#2a7bf0" />
  </svg>
);

const apps: { icon: React.ReactNode; dot?: boolean; active?: string }[] = [
  { icon: <span className="grid grid-cols-2 gap-px">{[0, 1, 2, 3].map((i) => <span key={i} className={`h-[14px] w-[14px] bg-gradient-to-br ${i < 2 ? 'from-[#5fc9fb] to-[#3fa3e4]' : 'from-[#3a9be0] to-[#2384d2]'}`} />)}</span> },
  { icon: <Line className="h-[29px] w-[27px] text-[#222]" vb="0 0 27 29" sw={2.8}><circle cx="15.500" cy="12" r="10" /><path d="m9 19-7.500 9" strokeWidth="3.600" /></Line> },
  { icon: <svg viewBox="0 0 30 29" className="h-[29px] w-[30px]"><rect x="0" y="8" width="23" height="20" rx="2" fill="#2b2b2b" /><rect x="7" y="0" width="23" height="20" rx="2" fill="#f7f7f7" /><rect x="7" y="8" width="16" height="12" fill="#c4c4c4" /></svg> },
  { icon: <svg viewBox="0 0 30 28" className="h-[28px] w-[30px]"><rect width="30" height="28" rx="1.500" fill="#2d2f33" /><rect x="2.500" y="2.500" width="11" height="23" rx="1" fill="#e8eaed" /><rect x="16.500" y="2.500" width="11" height="10" rx="1" fill="#48d5ff" /><rect x="16.500" y="15" width="11" height="4" rx="1" fill="#27a0e4" /><rect x="16.500" y="21.500" width="11" height="4" rx="1" fill="#1180dc" /></svg> },
  { dot: true, icon: <svg viewBox="0 0 31 27" className="h-[27px] w-[31px]"><path d="M0 2q0-2 2-2h8l3 3h16q2 0 2 2v6H0z" fill="#dd9a08" /><path d="M0 7h11l3-3h15q2 0 2 2v19q0 2-2 2H2q-2 0-2-2z" fill="#ffcf48" /><path d="M6 27v-6q0-2 2-2h15q2 0 2 2v6z" fill="#1273c4" /><path d="M9 22h13" stroke="#0b4f93" strokeWidth="1.200" /></svg> },
  { icon: <svg viewBox="0 0 30 30" className="h-[30px] w-[30px]"><defs><linearGradient id="ff" x1=".8" y1="0" x2=".3" y2="1"><stop offset="0" stopColor="#ffe94a" /><stop offset=".45" stopColor="#ff8a1e" /><stop offset="1" stopColor="#f4156e" /></linearGradient></defs><path d="M1 16C1 11 3 9 3 6l4 2c2-2 4-2 6-2 2-3 4-5 6-6 0 3 3 4 5 6l3-.500c3 6 3 13-1 18-6 7-17 7-22 0-2-2-3-5-3-7.500z" fill="url(#ff)" /><circle cx="15.500" cy="15" r="6" fill="#7a3fe0" /><path d="M8 11c4-1 7 0 8 2-3 0-4 1-5 3-2-1-3-3-3-5z" fill="#ff9a2a" /></svg> },
  { icon: <svg viewBox="0 0 30 30" className="h-[30px] w-[30px]"><defs><linearGradient id="st" x1="0" y1="0" x2="1" y2="1"><stop offset="0" stopColor="#0d6cbd" /><stop offset="1" stopColor="#22325c" /></linearGradient></defs><path d="M8 6V1.500h14V6" fill="none" stroke="#2ab5f2" strokeWidth="2" /><path d="M0 5h30v21q0 4-4 4H4q-4 0-4-4z" fill="url(#st)" /><path d="M9 11h5.500v5.500H9z" fill="#f25022" /><path d="M15.500 11H21v5.500h-5.500z" fill="#7fba00" /><path d="M9 17.500h5.500V23H9z" fill="#00a4ef" /><path d="M15.500 17.500H21V23h-5.500z" fill="#ffb900" /></svg> },
  { icon: <svg viewBox="0 0 32 30" className="h-[30px] w-[32px]"><defs><linearGradient id="c1" x1="0" y1="0" x2="0" y2="1"><stop offset="0" stopColor="#1593e8" /><stop offset=".5" stopColor="#2aa58a" /><stop offset="1" stopColor="#f3d52c" /></linearGradient><linearGradient id="c2" x1="0" y1="0" x2="0" y2="1"><stop offset="0" stopColor="#a15bf0" /><stop offset="1" stopColor="#ff6a6a" /></linearGradient></defs><path d="M8 1h11q3 0 2 3l-2 4h-4L10 20q-1 3-5 2-6-1-4-7L5 4q1-3 3-3z" fill="url(#c1)" /><path d="M16 1h4q3 0 4 6h-6z" fill="#1b49c9" /><path d="M24 7h4q4 0 4 5l-3 11H13l5-13q1-3 6-3z" fill="url(#c2)" /><rect x="10" y="20.500" width="21" height="9.500" rx="1.500" fill="#111" /><text x="20.500" y="28.300" textAnchor="middle" fontSize="8" fontWeight="bold" fill="#fff" fontFamily="Roboto">M365</text></svg> },
  { icon: <span className="flex h-[30px] w-[30px] items-center justify-center bg-[#1c1a1c]"><FaGithub className="h-[26px] w-[26px] text-white" /></span> },
  { icon: <ChromeColor className="h-[30px] w-[30px]" /> },
  { dot: true, icon: <FaSpotify className="h-[28px] w-[28px] rounded-full bg-[#10241a] text-[#1ed760]" /> },
  { dot: true, icon: <svg viewBox="0 0 30 30" className="h-[30px] w-[30px]"><path d="M15 0 26 4l4 11-4 11-11 4L4 26 0 15 4 4z" fill="#3a4048" /><path d="M15 2 25 5l3 10-3 10-10 3L5 25 2 15 5 5z" fill="#d5d8dc" /><circle cx="15" cy="15" r="11" fill="#153560" /><path d="m8.500 10 3 9.500 3.500-8 3.500 8 3-9.500" fill="none" stroke="#fff" strokeWidth="2.800" /></svg> },
  { dot: true, icon: <svg viewBox="0 0 30 28" className="h-[28px] w-[30px]"><defs><linearGradient id="pv" x1=".2" y1="0" x2=".6" y2="1"><stop offset="0" stopColor="#6a45ff" /><stop offset=".6" stopColor="#4c9af0" /><stop offset="1" stopColor="#5ff0dc" /></linearGradient></defs><path d="M2 0l25 3q4 1 2 4L17 26q-2 3-4 0L0 4q-1-4 2-4z" fill="#a9a2fb" /><path d="M1 5l19 2q3 1 2 3l-8 16Q9 20 1 5z" fill="url(#pv)" /></svg> },
  { dot: true, icon: <svg viewBox="0 0 27 28" className="h-[28px] w-[27px]"><path d="M15 4h12v20H15z" fill="#fff" stroke="#2b579a" /><path d="M16 8h8M16 11.500h8M16 15h8M16 18.500h8M16 21.500h8" stroke="#2b579a" strokeWidth="1.500" /><path d="M0 3 16 0v28L0 25z" fill="#2b579a" /><path d="m3 9.500 2 9 2.700-8.500 2.700 8.500 2-9" fill="none" stroke="#fff" strokeWidth="1.900" /></svg> },
  { dot: true, active: 'bg-white', icon: <svg viewBox="0 0 27 27" className="h-[27px] w-[27px]"><defs><linearGradient id="ph" x1="0" y1="0" x2="1" y2="0"><stop offset="0" stopColor="#1679d6" /><stop offset="1" stopColor="#6a4fb0" /></linearGradient></defs><rect width="27" height="27" rx="2" fill="url(#ph)" /><path d="M0 25 12 10q2-2 4 0l11 12v3q0 2-2 2H2z" fill="#1b8fe8" /><path d="M2 27 14 12l5 6-8 9z" fill="#58dcf8" /><circle cx="18.500" cy="5" r="2.600" fill="#f2f2ff" /></svg> },
  { dot: true, icon: <svg viewBox="0 0 30 30" className="h-[30px] w-[30px]"><path d="M22 0l8 3v24l-8 3z" fill="#2fb0f4" /><path d="M22 0v8L4 23.500l-3.500-3q-1-1 0-2z" fill="#0072bd" /><path d="M22 30v-8L4 6.500l-3.500 3q-1 1 0 2z" fill="#1089d8" /></svg> },
  { active: 'bg-[#ecedf7] border border-[#d3d6e6]', icon: <span className="relative"><ChromeColor className="h-[30px] w-[30px]" /><span className="absolute right-[-6px] top-[-6px] flex h-[20px] w-[20px] items-center justify-center rounded-full bg-[#455a64] text-[11px] font-semibold text-white">C</span><span className="absolute bottom-0 right-0 flex h-[15px] w-[15px] items-center justify-center rounded-full bg-[#455a64] text-[9px] font-semibold text-white">C</span></span> },
  { dot: true, icon: <svg viewBox="0 0 30 27" className="h-[27px] w-[30px]"><rect width="30" height="9" rx="1" fill="#a32350" /><rect y="9" width="30" height="9" rx="1" fill="#3c3aa5" /><rect y="18" width="30" height="9" rx="1" fill="#1f8a35" /><path d="M0 2.500h30M0 11.500h30M0 20.500h30" stroke="#ffffff50" strokeWidth="1.500" /><path d="M4 1v25M26 1v25" stroke="#e6c14a" strokeWidth="1.500" strokeDasharray="6 3" /><rect x="11" width="8" height="27" fill="#9a5b22" /><rect x="10" y="9.500" width="10" height="8" rx="1" fill="none" stroke="#f4e3b0" strokeWidth="2" /></svg> },
];

const Taskbar = () => (
  <div className="flex h-[60px] bg-[linear-gradient(90deg,#d3e4f5_0%,#d6e3f4_24%,#d9dced_30%,#d3dcf5_42%,#d5dcf3_62%,#d9d9eb_72%,#dfe8f3_81%,#dfecf6_100%)] pl-[466px]">
    {apps.map((a, i) => (
      <div key={i} className="flex w-[55px] shrink-0 justify-center">
        <div className={`relative mt-[5px] flex h-[50px] w-[49px] items-center justify-center rounded-[5px] ${a.active ?? ''}`}>
          {a.icon}
          {a.dot && <span className="absolute bottom-[1px] h-[4px] w-[8px] rounded-full bg-[#7d808c]" />}
          {i === 16 && <span className="absolute bottom-0 h-[4px] w-[20px] rounded-full bg-[#0f7bd9]" />}
        </div>
      </div>
    ))}
    <div className="ml-auto flex h-[60px] items-center text-[#111]">
      <Line className="h-[10px] w-[16px]" vb="0 0 16 10" sw={1.6}><path d="m1 9 7-7 7 7" /></Line>
      <Line className="ml-[15px] h-[17px] w-[16px]" vb="0 0 16 17" sw={1.4}><path d="M.700 16A16 16 0 0 1 16 1.500" stroke="#8a8f96" /><path d="M4 16A12 12 0 0 1 16 5.500M7.500 16A8 8 0 0 1 16 9.500" /><circle cx="13.500" cy="14.500" r="1.800" fill="currentColor" strokeWidth="0" /></Line>
      <Line className="ml-[11px] h-[15px] w-[20px]" vb="0 0 20 15" sw={1.3}><path d="M6.500 3.700H18v9.600H5V8.500M19.300 6.500v4" /><path d="M7 5.500h9.500v6H7z" fill="currentColor" stroke="none" /><path d="M1.500 0v5h3.500V0M3.200 5v3.500H5" /></Line>
      <Line className="ml-[10px] h-[18px] w-[21px]" vb="0 0 21 18" sw={1.4}><path d="M1 6h3l4-4v14l-4-4H1zM11 6q2 3 0 6M14 4q4 5 0 10M17 2q5 7 0 14" /></Line>
      <svg viewBox="0 0 21 18" className="ml-[9px] h-[18px] w-[21px]"><path d="M4 14a4 4 0 0 1-1-7.500C4 2 11 0 14 5c4 0 5 5 2 9z" fill="#b8b8b8" stroke="#555" strokeWidth="1.500" /><circle cx="15" cy="12" r="5.700" fill="#d9232e" /><path d="m13 10 4 4m0-4-4 4" stroke="#fff" strokeWidth="1.500" /></svg>
      <div className="ml-[8px] w-[76px] text-center text-[15px] leading-[21px] text-[#1a1a1a]"><div className="tracking-[-0.8px]">3:29 PM</div><div className="tracking-[-0.4px]">4/30/2025</div></div>
      <svg viewBox="0 0 20 20" className="ml-[20px] h-[20px] w-[20px]"><path d="M0 0h20v17h-7l-3 3-3-3H0z" fill="#000" /><path d="M4 5h12M4 9h12M4 12.500h8" stroke="#fff" strokeWidth="1.300" /></svg>
      <span className="ml-[25px] mr-[5px] h-[60px] w-px bg-[#b4bcc8]" />
    </div>
  </div>
);

export default function App() {
  return (
    <div className="flex h-[1080px] w-[1920px] flex-col overflow-hidden bg-white font-['Open_Sans',sans-serif]">
      <TabStrip />
      <Toolbar />
      <AwsHeader />
      <Favorites />
      <Breadcrumbs />
      <div className="flex h-[622px] overflow-hidden">
        <Sidebar />
        <Main />
      </div>
      <Footer />
      <Taskbar />
    </div>
  );
}
